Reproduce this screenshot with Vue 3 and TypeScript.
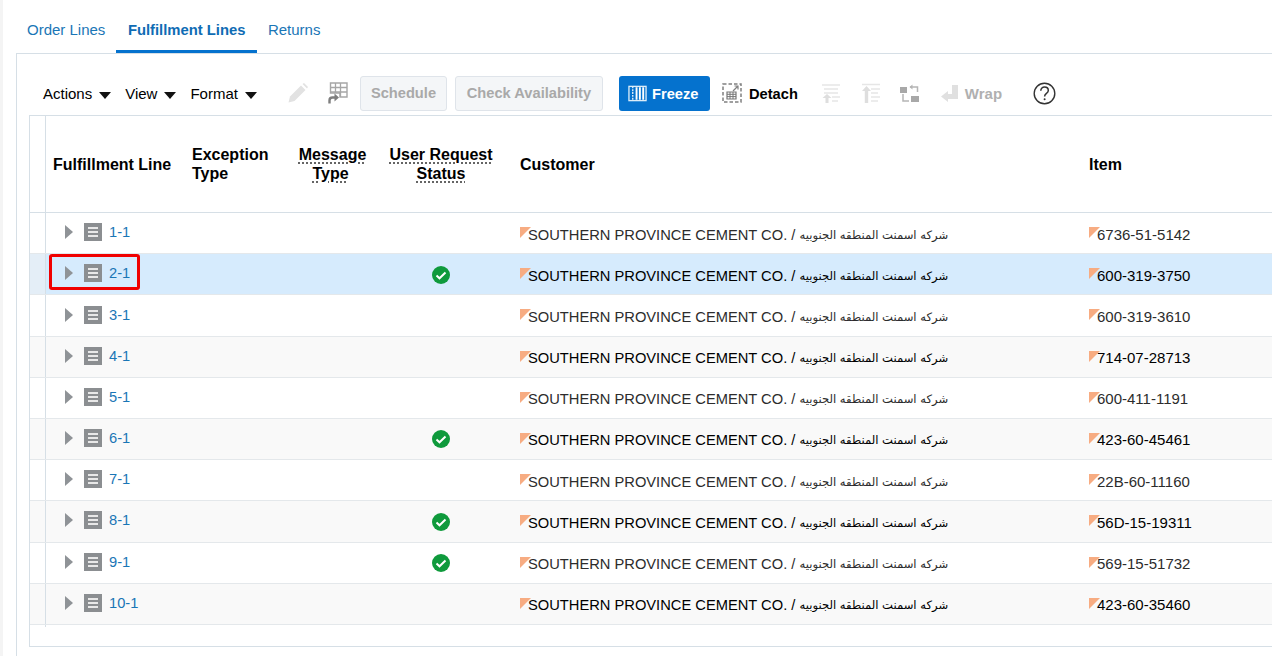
<script setup lang="ts">
interface Line {
  id: string
  item: string
  ok: boolean
}

const lines: Line[] = [
  { id: '1-1', item: '6736-51-5142', ok: false },
  { id: '2-1', item: '600-319-3750', ok: true },
  { id: '3-1', item: '600-319-3610', ok: false },
  { id: '4-1', item: '714-07-28713', ok: false },
  { id: '5-1', item: '600-411-1191', ok: false },
  { id: '6-1', item: '423-60-45461', ok: true },
  { id: '7-1', item: '22B-60-11160', ok: false },
  { id: '8-1', item: '56D-15-19311', ok: true },
  { id: '9-1', item: '569-15-51732', ok: true },
  { id: '10-1', item: '423-60-35460', ok: false },
]

const selected = '2-1'
const customer = 'SOUTHERN PROVINCE CEMENT CO. / '
const arabic = 'شركه اسمنت المنطقه الجنوبيه'

function rowClass(i: number, id: string) {
  return { alt: i % 2 === 1, selected: id === selected }
}
</script>

<template>
  <div class="page">
    <nav class="tabs">
      <a class="tab">Order Lines</a>
      <a class="tab active">Fulfillment Lines</a>
      <a class="tab">Returns</a>
    </nav>

    <section class="panel">
      <div class="toolbar">
        <span class="menu">Actions <i class="caret"></i></span>
        <span class="menu">View <i class="caret"></i></span>
        <span class="menu">Format <i class="caret"></i></span>

        <svg class="ico pencil" width="22" height="22" viewBox="0 0 22 22">
          <path d="M1.500 20.500l1.500-6L14 3.500l4.500 4.500L7.500 19z" fill="#e2e2e2" />
          <path d="M15.500 2l1.500-1 4 4-1 1.500z" fill="#e2e2e2" />
        </svg>
        <svg class="ico colfreeze" width="20" height="22" viewBox="0 0 20 22">
          <path d="M2.500 1h16.500v14h-7V11H2.500z" fill="#fff" stroke="#a6a6a6" stroke-width="1.400" />
          <path d="M2.500 5.500h16.500M2.500 10h16.500M7.500 1v10M12.500 1v14" stroke="#a6a6a6" stroke-width="1.300" />
          <path d="M1.500 21.500v-3c0-2 1-3 3-3h3" fill="none" stroke="#7e7e7e" stroke-width="2.400" />
          <path d="M6.500 11.500l4.500 4-4.500 4z" fill="#7e7e7e" />
        </svg>

        <button class="btn off schedule">Schedule</button>
        <button class="btn off check">Check Availability</button>

        <button class="btn on freeze">
          <svg width="19" height="17" viewBox="0 0 20 17">
            <rect x="1" y="1" width="18" height="15" fill="none" stroke="#dcecf8" stroke-width="1.400" />
            <path d="M5 1v15" stroke="#e6f1fa" stroke-width="1.400" stroke-dasharray="2 1" />
            <path d="M9 2v13M12.500 2v13M16 2v13" stroke="#fff" stroke-width="2" />
          </svg>
          <span class="label">Freeze</span>
        </button>

        <span class="detach">
          <svg width="20" height="20" viewBox="0 0 20 20">
            <path d="M1 1h18v18H1z" fill="none" stroke="#808080" stroke-width="1.500" stroke-dasharray="3.500 2" />
            <path d="M5 9h9v7H5z" fill="none" stroke="#777" stroke-width="1.200" />
            <path d="M5 11.300h9M5 13.600h9M8 9v7M11 9v7" stroke="#777" />
            <path d="M11 8l5-5M12.500 3H16v3.500" fill="none" stroke="#808080" stroke-width="1.200" />
          </svg>
          <span class="label">Detach</span>
        </span>

        <svg class="ico upper" width="18" height="20" viewBox="0 0 18 20">
          <path d="M0 2h18M2 6h14M2 10h14" stroke="#e6e6e6" stroke-width="1.500" />
          <path d="M10 14h8M10 18h6" stroke="#e6e6e6" stroke-width="1.500" />
          <path d="M5 11l4.500 4H6.500v5h-3v-5H.5z" fill="#dedede" />
        </svg>
        <svg class="ico lower" width="18" height="20" viewBox="0 0 18 20">
          <path d="M0 1.500h18M9 6h9M9 10h7M9 14h9M9 18h7" stroke="#e6e6e6" stroke-width="1.500" />
          <path d="M4.500 3l4.500 5H6.200v12H2.800V8H0z" fill="#dedede" />
        </svg>
        <svg class="ico pivot" width="19" height="19" viewBox="0 0 19 19">
          <rect x="0" y="3" width="7" height="6" fill="#a8a8a8" />
          <rect x="11" y="12" width="8" height="6" fill="#a8a8a8" />
          <path d="M10 3h7.500v5M3 10v7h6" fill="none" stroke="#b5b5b5" stroke-width="1.500" />
          <path d="M12.500 .5v5L9.500 3z" fill="#b5b5b5" />
        </svg>
        <svg class="ico wrap-ico" width="17" height="17" viewBox="0 0 17 17">
          <path d="M11 0h6v14H7v3L0 11.500 7 6v3h4z" fill="#e0e0e0" />
        </svg>
        <span class="wrap-text">Wrap</span>

        <svg class="ico help" width="23" height="23" viewBox="0 0 23 23">
          <circle cx="11.500" cy="11.500" r="10.300" fill="none" stroke="#333" stroke-width="1.400" />
          <path d="M7.800 8.800c0-2.400 1.700-3.700 3.800-3.700s3.700 1.300 3.700 3.300c0 3-3.700 2.900-3.700 6" fill="none" stroke="#333" stroke-width="1.500" />
          <circle cx="11.600" cy="17.300" r="1" fill="#333" />
        </svg>
      </div>

      <div class="table">
        <div class="row head">
          <div class="gutter"></div>
          <div class="cell c-line"><b>Fulfillment Line</b></div>
          <div class="cell c-exc"><b>Exception<br />Type</b></div>
          <div class="cell c-msg center"><b><u>Message</u><br /><u class="nudge">Type</u></b></div>
          <div class="cell c-req center"><b><u>User Request</u><br /><u>Status</u></b></div>
          <div class="cell c-cust"><b>Customer</b></div>
          <div class="cell c-item"><b>Item</b></div>
        </div>

        <div v-for="(l, i) in lines" :key="l.id" class="row body" :class="rowClass(i, l.id)">
          <div class="gutter"></div>
          <div class="cell c-line">
            <i class="arrow"></i>
            <span class="doc"><i></i><i></i><i></i></span>
            <a class="link">{{ l.id }}</a>
            <span v-if="l.id === selected" class="callout"></span>
          </div>
          <div class="cell c-exc"></div>
          <div class="cell c-msg"></div>
          <div class="cell c-req center">
            <svg v-if="l.ok" class="ok" width="18" height="18" viewBox="0 0 18 18">
              <circle cx="9" cy="9" r="9" fill="#0f9a3c" />
              <path d="M4.500 9.500l3 2.800 6-5.800" fill="none" stroke="#fff" stroke-width="2" />
            </svg>
          </div>
          <div class="cell c-cust text"><i class="flag"></i>{{ customer }}<span class="ar" dir="rtl">{{ arabic }}</span></div>
          <div class="cell c-item text"><i class="flag"></i>{{ l.item }}</div>
        </div>
        <div class="table-end"><div class="gutter-stub"></div></div>
      </div>
    </section>
  </div>
</template>

<style scoped>
.page {
  width: 1272px;
  height: 656px;
  overflow: hidden;
  box-sizing: border-box;
  padding-left: 16px;
  font: 14.67px "Liberation Sans", Arial, sans-serif;
  color: #000;
  background: #fff;
  border-left: 3px solid #f4f4f4;
  margin: 0;
}
.tabs {
  display: flex;
  height: 53px;
  margin-left: -3px;
}
.tab {
  display: flex;
  align-items: center;
  height: 53px;
  box-sizing: border-box;
  padding: 6px 11px 0;
  font-size: 15px;
  color: #1a76b6;
}
.tab.active {
  color: #0f6cb4;
  font-size: 14.8px;
  font-weight: bold;
  border-bottom: 3px solid #0572ce;
  padding: 9px 11.5px 0;
}
.panel {
  box-sizing: border-box;
  height: 640px;
  width: 1300px;
  margin-left: -3px;
  border: 1px solid #d6dfe6;
  padding-left: 12px;
}
.toolbar {
  display: flex;
  align-items: center;
  height: 61px;
  padding: 17px 0 0 14px;
  box-sizing: border-box;
  white-space: nowrap;
}
.menu {
  display: flex;
  align-items: center;
  gap: 7px;
  margin-right: 14px;
  padding-top: 1px;
  font-size: 15px;
}
.caret {
  display: block;
  width: 0;
  height: 0;
  border-left: 6px solid transparent;
  border-right: 6px solid transparent;
  border-top: 7px solid #111;
  margin-top: 3px;
}
.ico {
  flex: none;
}
.pencil {
  margin-left: 16px;
}
.colfreeze {
  margin-left: 19px;
}
.btn {
  box-sizing: border-box;
  height: 35px;
  border-radius: 3px;
  font: bold 14.67px "Liberation Sans", Arial, sans-serif;
  display: flex;
  align-items: center;
  justify-content: center;
}
.btn.off {
  background: #f4f6f8;
  border: 1px solid #dfe4ea;
  color: #a9a9a9;
}
.schedule {
  width: 87px;
  margin-left: 12px;
}
.check {
  width: 148px;
  margin-left: 8px;
}
.btn.on {
  width: 91px;
  margin-left: 16px;
  gap: 5px;
  padding: 0 0 0 9px;
  justify-content: flex-start;
  background: #0572ce;
  border: none;
  color: #fff;
}
.label {
  padding-top: 1px;
}
.detach {
  display: flex;
  align-items: center;
  gap: 7px;
  margin-left: 12px;
  font-weight: bold;
}
.upper {
  margin-left: 24px;
}
.lower {
  margin-left: 22px;
}
.pivot {
  margin-left: 20px;
}
.wrap-ico {
  margin-left: 22px;
}
.wrap-text {
  margin-left: 7px;
  font-size: 15px;
  font-weight: bold;
  color: #b0b0b0;
}
.help {
  margin-left: 31px;
}
.table {
  width: 1300px;
  height: 532px;
  border: 1px solid #d6dfe6;
  box-sizing: border-box;
}
.row {
  display: flex;
}
.row.head {
  height: 97px;
  border-bottom: 1px solid #d6dfe6;
  box-sizing: border-box;
}
.row.head .cell {
  padding-top: 29px;
  line-height: 19px;
  font-size: 16px;
}
.row.head .gutter {
  height: 96px;
}
.row.head .c-line {
  padding-top: 39px;
}
.row.head .c-cust,
.row.head .c-item {
  padding-top: 39px;
}
.row.body {
  height: 41.19px;
  box-sizing: border-box;
  border-bottom: 1px solid #e4e8eb;
}
.gutter {
  flex: none;
  width: 15px;
  border-right: 1px solid #d6dfe6;
}
.cell {
  flex: none;
  box-sizing: border-box;
  position: relative;
}
.center {
  text-align: center;
}
.c-line {
  width: 140px;
  padding-left: 7px;
}
.c-exc {
  width: 108px;
  padding-left: 6px;
}
.c-msg {
  width: 75px;
  padding-left: 2px;
}
.c-req {
  width: 144px;
}
.c-cust {
  width: 568px;
  padding-left: 7px;
}
.c-item {
  width: 200px;
  padding-left: 8px;
}
u {
  text-decoration: underline dotted #333;
  text-underline-offset: 3px;
}
u.nudge {
  margin-right: 4px;
}
.row.body .c-line {
  display: flex;
  align-items: center;
  padding: 0 0 1.85px 19px;
}
.arrow {
  display: block;
  width: 0;
  height: 0;
  border-top: 7px solid transparent;
  border-bottom: 7px solid transparent;
  border-left: 8px solid #8f9397;
}
.doc {
  display: flex;
  flex-direction: column;
  justify-content: center;
  gap: 2px;
  width: 18px;
  height: 18px;
  margin-left: 11px;
  background: #8b8e91;
}
.doc i {
  display: block;
  height: 2px;
  margin: 0 4px;
  background: #e8e8e8;
}
.link {
  margin-left: 7px;
  color: #1a76b6;
}
.callout {
  position: absolute;
  left: 3px;
  top: 0;
  width: 91px;
  height: 36px;
  box-sizing: border-box;
  border: 3px solid #f00000;
  border-radius: 3px;
}
.row.body .c-req {
  display: flex;
  align-items: center;
  justify-content: center;
}
.ok {
  margin-bottom: -0.8px;
}
.text {
  display: flex;
  align-items: center;
  padding-top: 2.85px;
  color: #2c2c2c;
  white-space: pre;
  position: relative;
}
.row.alt .text {
  color: #000;
}
.flag {
  position: absolute;
  left: 7px;
  top: 14px;
  width: 0;
  height: 0;
  border-top: 11px solid #f7ac82;
  border-right: 11px solid transparent;
}
.c-cust.text {
  padding-left: 15px;
  font-size: 14.7px;
}
.c-item.text {
  padding-left: 16px;
  padding-top: 1.85px;
  font-size: 15px;
}
.c-item .flag {
  left: 8px;
}
.ar {
  font: 11.6px "DejaVu Sans", sans-serif;
  unicode-bidi: isolate;
}
.row.alt {
  background: #f9f9f9;
}
.row.selected {
  background: #d6ebfd;
}
.row.selected .gutter {
  background: #e4eef7;
}
.row.body .gutter {
  height: 100%;
}
.table-end {
  height: 1px;
}
.gutter-stub {
  width: 15px;
  height: 2px;
  border-right: 1px solid #d6dfe6;
}
</style>

<style>
html,
body {
  margin: 0;
  background: #fff;
}
</style>
